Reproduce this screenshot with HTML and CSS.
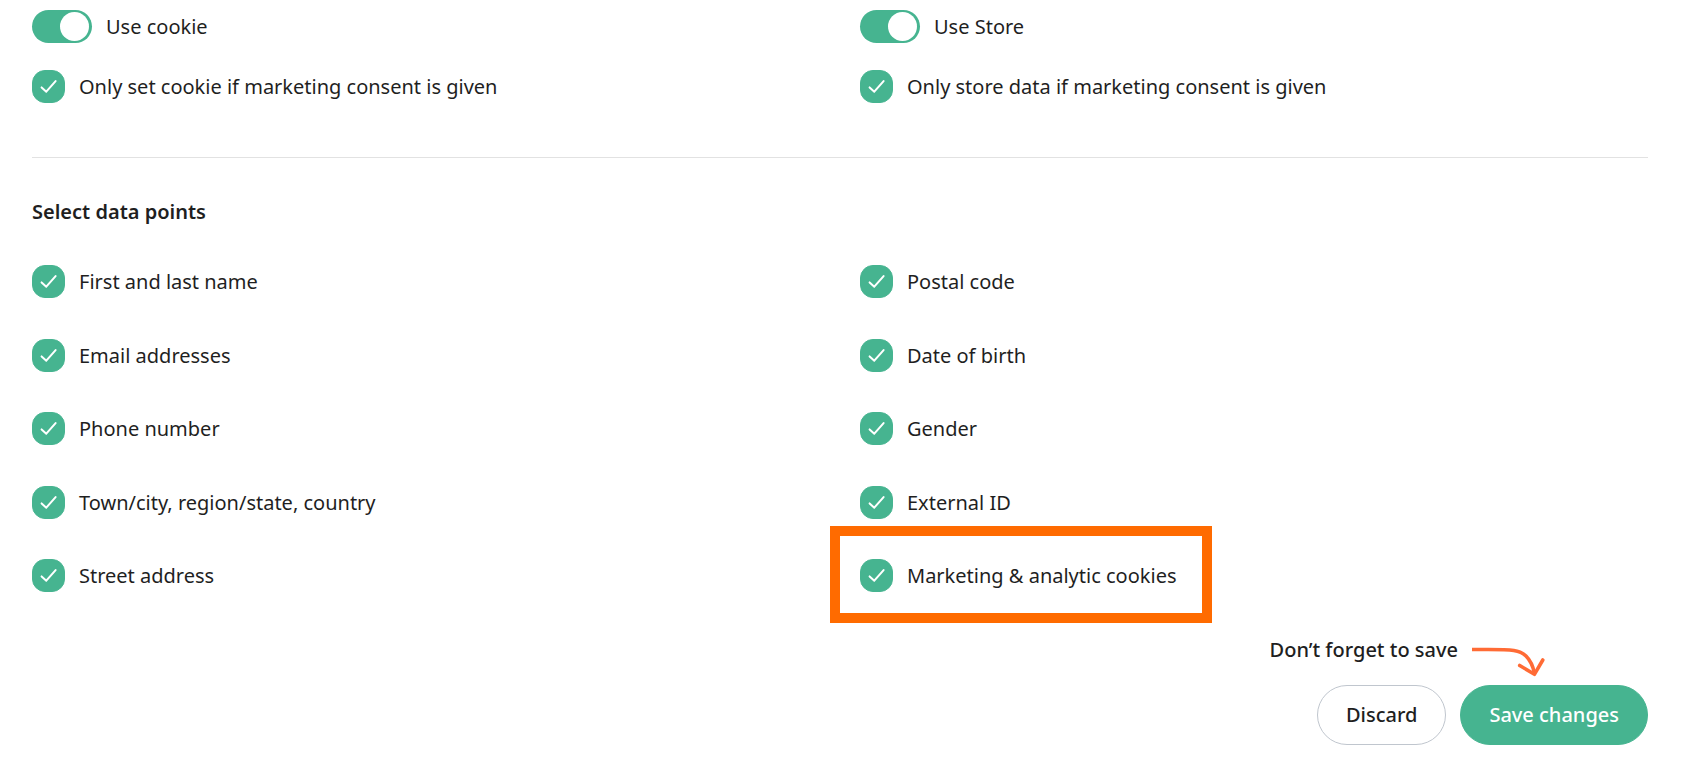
FILE: index.html
```html
<!DOCTYPE html>
<html lang="en">
<head>
<meta charset="utf-8">
<meta name="viewport" content="width=device-width, initial-scale=1">
<title>Data settings</title>
<link rel="stylesheet" href="styles.css">
</head>
<body>
<svg class="sprite" aria-hidden="true">
  <symbol id="tick" viewBox="0 0 33 33"><path d="M9.600 17.400 14.300 21.700 23.600 11.100" fill="none" stroke="#fff" stroke-width="2" stroke-linecap="round" stroke-linejoin="round"/></symbol>
</svg>
<form class="settings">
  <div class="columns">
    <div class="stack stack-tight">
      <label class="option"><input class="switch" type="checkbox" role="switch" checked><span>Use cookie</span></label>
      <label class="option"><span class="box"><input type="checkbox" checked><svg><use href="#tick"/></svg></span><span>Only set cookie if marketing consent is given</span></label>
    </div>
    <div class="stack stack-tight">
      <label class="option"><input class="switch" type="checkbox" role="switch" checked><span>Use Store</span></label>
      <label class="option"><span class="box"><input type="checkbox" checked><svg><use href="#tick"/></svg></span><span>Only store data if marketing consent is given</span></label>
    </div>
  </div>
  <hr class="divider">
  <h2 class="heading">Select data points</h2>
  <div class="columns">
    <div class="stack stack-roomy">
      <label class="option"><span class="box"><input type="checkbox" checked><svg><use href="#tick"/></svg></span><span>First and last name</span></label>
      <label class="option"><span class="box"><input type="checkbox" checked><svg><use href="#tick"/></svg></span><span>Email addresses</span></label>
      <label class="option"><span class="box"><input type="checkbox" checked><svg><use href="#tick"/></svg></span><span>Phone number</span></label>
      <label class="option"><span class="box"><input type="checkbox" checked><svg><use href="#tick"/></svg></span><span>Town/city, region/state, country</span></label>
      <label class="option"><span class="box"><input type="checkbox" checked><svg><use href="#tick"/></svg></span><span>Street address</span></label>
    </div>
    <div class="stack stack-roomy">
      <label class="option"><span class="box"><input type="checkbox" checked><svg><use href="#tick"/></svg></span><span>Postal code</span></label>
      <label class="option"><span class="box"><input type="checkbox" checked><svg><use href="#tick"/></svg></span><span>Date of birth</span></label>
      <label class="option"><span class="box"><input type="checkbox" checked><svg><use href="#tick"/></svg></span><span>Gender</span></label>
      <label class="option"><span class="box"><input type="checkbox" checked><svg><use href="#tick"/></svg></span><span>External ID</span></label>
      <label class="option highlight"><span class="box"><input type="checkbox" checked><svg><use href="#tick"/></svg></span><span>Marketing &amp; analytic cookies</span></label>
    </div>
  </div>
  <div class="note">
    <span>Don’t forget to save</span>
    <svg class="arrow" viewBox="0 0 73 30" aria-hidden="true"><path d="M0 2.500H16C40 2.500 48 3 54 9 59 14 61 19 62.300 26" fill="none" stroke="#ff6b35" stroke-width="3.600"/><path d="M47.700 18.500 62.400 27.300 70.800 13" fill="none" stroke="#ff6b35" stroke-width="3.600" stroke-linecap="round" stroke-linejoin="round"/></svg>
  </div>
  <div class="actions">
    <button class="button" type="button">Discard</button>
    <button class="button button-primary" type="submit">Save changes</button>
  </div>
</form>
</body>
</html>
```
FILE: styles.css
```css
* {
  box-sizing: border-box;
}

body {
  margin: 0;
  background: #fff;
  color: #1f1f1f;
  font: 400 20px/33px "Noto Sans", "Open Sans", sans-serif;
}

.sprite {
  position: absolute;
  width: 0;
  height: 0;
}

.settings {
  padding: 10px 38px 32px 32px;
}

.columns {
  display: grid;
  grid-template-columns: 1fr 1fr;
  column-gap: 40px;
}

.stack {
  display: flex;
  flex-direction: column;
  align-items: flex-start;
  justify-content: space-between;
}

.stack-tight {
  gap: 27px;
}

.stack-roomy {
  gap: 40px;
  min-height: 327px;
}

.option {
  display: flex;
  align-items: center;
  gap: 14px;
}

.switch {
  appearance: none;
  display: flex;
  flex: none;
  justify-content: flex-end;
  width: 60px;
  height: 33px;
  margin: 0;
  padding: 2px 3px 2px 2px;
  border-radius: 17px;
  background: #46b490;
}

.switch::before {
  content: "";
  width: 29px;
  height: 29px;
  border-radius: 50%;
  background: #fff;
}

.switch:not(:checked) {
  justify-content: flex-start;
  background: #b8bec6;
}

.box {
  display: grid;
  flex: none;
  width: 33px;
  height: 33px;
}

.box > * {
  grid-area: 1 / 1;
  width: 33px;
  height: 33px;
}

.box input {
  appearance: none;
  margin: 0;
  border: 1px solid #b8bec6;
  border-radius: 13px;
}

.box input:checked {
  border-color: #46b490;
  background: #46b490;
}

.box svg {
  z-index: 1;
  pointer-events: none;
}

.divider {
  height: 1px;
  margin: 54px 0 37px;
  border: 0;
  background: #e2e2e2;
}

.heading {
  margin: 0 0 37px;
  font-size: 20px;
  font-weight: 600;
}

.highlight {
  position: relative;
}

.highlight::after {
  content: "";
  position: absolute;
  inset: -33px -35px -31px -30px;
  border: 10px solid #ff6b00;
  pointer-events: none;
}

.note {
  display: flex;
  align-items: flex-start;
  justify-content: flex-end;
  gap: 14px;
  margin: 41px 0 8px;
  padding-right: 103px;
  font-weight: 500;
}

.arrow {
  width: 73px;
  height: 30px;
  margin-top: 14px;
}

.actions {
  display: flex;
  justify-content: flex-end;
  gap: 14px;
}

.button {
  padding: 13px 28px;
  border: 1px solid #c0c6ce;
  border-radius: 30px;
  background: #fff;
  color: inherit;
  font: inherit;
  font-weight: 500;
  line-height: 32px;
}

.button-primary {
  border-color: #46b490;
  background: #46b490;
  color: #fff;
}
```
